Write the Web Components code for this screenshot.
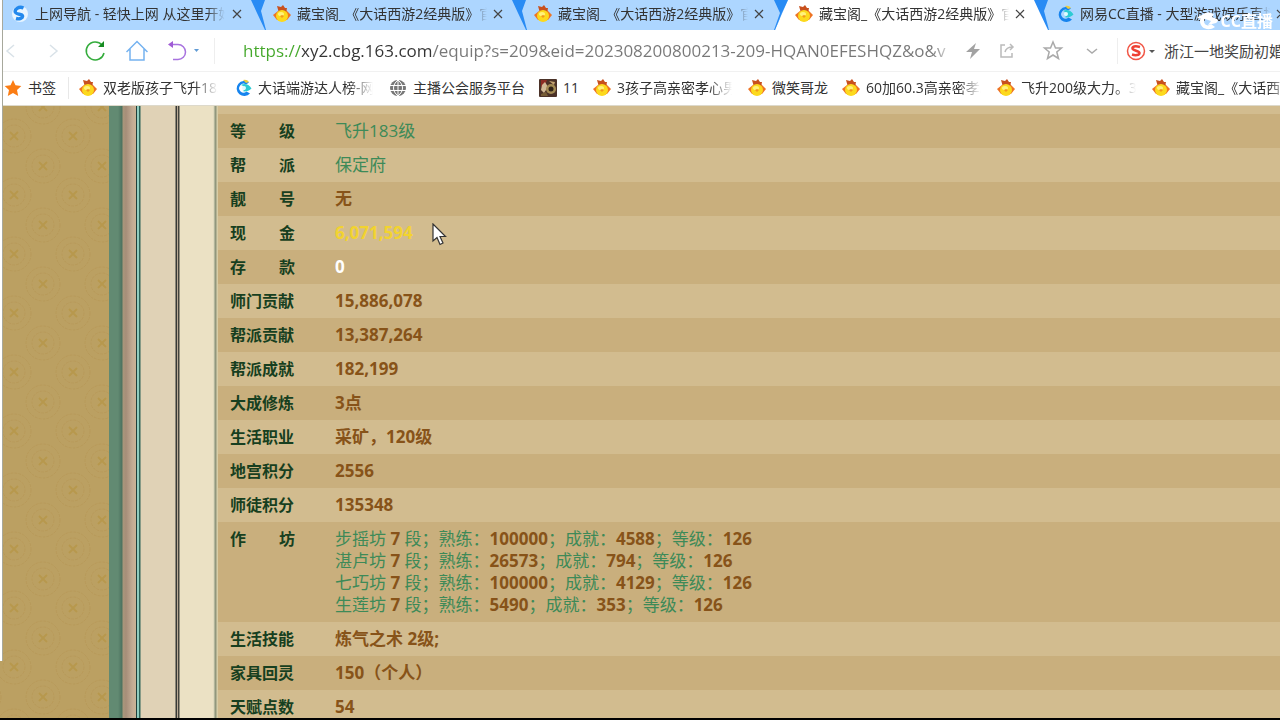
<!DOCTYPE html>
<html lang="zh-CN">
<head>
<meta charset="utf-8">
<title>藏宝阁_《大话西游2经典版》</title>
<style>
html, body { margin: 0; height: 100%; }
body { overflow: hidden; font-family: "Open Sans", "Noto Sans CJK SC", sans-serif; font-size: 14px; color: #333; background: #000; }
</style>
</head>
<body>
<browser-window>
  <tab-strip slot="tabs">
    <browser-tab icon="sogou" first>上网导航 - 轻快上网 从这里开始</browser-tab>
    <browser-tab icon="duck">藏宝阁_《大话西游2经典版》官方</browser-tab>
    <browser-tab icon="duck" before-active>藏宝阁_《大话西游2经典版》官方</browser-tab>
    <browser-tab icon="duck" active>藏宝阁_《大话西游2经典版》官方</browser-tab>
    <browser-tab icon="cc" last>网易CC直播 - 大型游戏娱乐直播</browser-tab>
  </tab-strip>
  <tool-bar slot="toolbar"></tool-bar>
  <bookmark-bar slot="bookmarks">
    <book-mark icon="star">书签</book-mark>
    <book-mark icon="duck" divided>双老版孩子飞升183</book-mark>
    <book-mark icon="cc">大话端游达人榜-网易</book-mark>
    <book-mark icon="globe">主播公会服务平台</book-mark>
    <book-mark icon="photo">11</book-mark>
    <book-mark icon="duck">3孩子高亲密孝心男号</book-mark>
    <book-mark icon="duck">微笑哥龙</book-mark>
    <book-mark icon="duck">60加60.3高亲密孝心</book-mark>
    <book-mark icon="duck">飞升200级大力。3孩</book-mark>
    <book-mark icon="duck">藏宝阁_《大话西游2</book-mark>
  </bookmark-bar>
  <game-page>
    <role-info></role-info>
  </game-page>
</browser-window>
<live-mark></live-mark>
<mouse-pointer></mouse-pointer>

<script>
const define = (name, html, setup) => {
  const template = document.createElement('template');
  template.innerHTML = html;
  customElements.define(name, class extends HTMLElement {
    constructor() {
      super();
      this.attachShadow({ mode: 'open' }).append(template.content.cloneNode(true));
    }
    connectedCallback() { if (setup) setup(this, this.shadowRoot); }
  });
};

const ICONS = {
  duck: `<path d="M0 10L5 6L13 5L18 10L14 15L4 15Z" fill="#ee7424"/><path d="M4 1L8 2L10 0L12 3L14 3L13 8L6 8Z" fill="#c8501e"/><ellipse cx="9" cy="11" rx="6" ry="6" fill="#fcd91d"/><ellipse cx="8" cy="9" rx="3" ry="2" fill="#fff27c"/><path d="M7 11L9 10L11 11L9 13Z" fill="#f29a1c"/>`,
  cc: `<path d="M15 3.5A7.6 7.6 0 1 0 16 14.5L12.5 12.5A4.4 4.4 0 1 1 12 5.5Z" fill="#1684ee"/><path d="M7 6C10 4 15 5 17.500 9.500C15 12 11 13 8.500 12C12 11 12 8 7 6Z" fill="#2dcbd4"/><path d="M9 1Q13 0 15 3L12 4Z" fill="#edcc3d"/><circle cx="10" cy="9" r="2" fill="#dffcff"/>`,
  sogou: `<circle cx="9" cy="9" r="8" fill="#e8f5ff"/><path d="M12.500 3C8 1 3 4 4.500 7.500C6 10 11 8.500 11.500 11C12 13 8.500 14.500 5 13.500" fill="none" stroke="#2389ed" stroke-width="3.4"/>`,
  star: `<path d="M9 1L11.500 6.300L17.300 7L13 11L14.200 17L9 14L3.800 17L5 11L.7 7L6.500 6.300Z" fill="#fb7d14"/>`,
  globe: `<circle cx="9" cy="9" r="8" fill="#777"/><path d="M1 6.500H17M1 11.500H17M9 1V17M9 1C3 6 3 12 9 17M9 1C15 6 15 12 9 17" stroke="#fff" fill="none"/>`,
  photo: `<rect width="18" height="18" rx="1" fill="#4b3228"/><path d="M2 1H8L6 6L2 8Z" fill="#8d2d24"/><path d="M3 6L6 3L9 8L5 14L2 11Z" fill="#d1b995"/><circle cx="12" cy="10" r="5" fill="#a38b54"/><circle cx="12" cy="10" r="2.500" fill="#2f2218"/><path d="M10 2L16 3L15 6Z" fill="#c5a572"/><path d="M2 15L7 13L9 17H2Z" fill="#765c35"/>`
};

customElements.define('site-icon', class extends HTMLElement {
  static observedAttributes = ['name'];
  constructor() {
    super();
    this.attachShadow({ mode: 'open' }).innerHTML = `<style>
:host { display: block; flex: none; width: 18px; height: 18px; }
svg { display: block; }
</style><svg width="18" height="18" viewBox="0 0 18 18" aria-hidden="true"></svg>`;
  }
  attributeChangedCallback(attr, old, value) {
    this.shadowRoot.querySelector('svg').innerHTML = ICONS[value] || '';
  }
});

define('browser-window', `<style>
:host { display: flex; flex-direction: column; height: 100vh; box-sizing: border-box; position: relative; border-bottom: 2px solid #000; }
header { flex: none; background: #fff; }
main { flex: 1; min-height: 0; overflow: hidden; }
.edge { position: absolute; left: 0; top: 0; width: 2px; height: 92%; background: #fff; border-right: 1px solid #a7a89c; }
</style>
<header><slot name="tabs"></slot><slot name="toolbar"></slot><slot name="bookmarks"></slot></header>
<main><slot></slot></main><div class="edge"></div>`);

define('tab-strip', `<style>
:host { display: flex; height: 30px; background: #add6ff; overflow: hidden; }
</style><slot></slot>`);

define('browser-tab', `<style>
:host { display: flex; flex: none; align-items: center; box-sizing: border-box; width: 261px; height: 30px; padding: 0 12px 2px 15px; position: relative; }
:host([first]) { width: 258px; padding-left: 11px; }
:host([active]) { background: #fff; }
.label { width: 190px; margin-left: 6px; line-height: 22px; white-space: nowrap; overflow: hidden; mask-image: linear-gradient(90deg, #000 172px, transparent 190px); }
button { width: 18px; height: 18px; margin-left: auto; padding: 0; border: 0; background: none; }
button svg { display: block; margin: auto; }
.split { position: absolute; right: -10px; top: 0; z-index: 1; }
:host([last]) .split { display: none; }
</style>
<site-icon></site-icon><span class="label"><slot></slot></span>
<button aria-label="关闭标签页"><svg width="10" height="10" viewBox="0 0 10 10"><path d="M1 1L9 9M9 1L1 9" stroke="#444" stroke-width="1.200"/></svg></button>
<svg class="split" width="20" height="30" viewBox="0 0 20 30"></svg>`,
  (el, root) => {
    root.querySelector('site-icon').setAttribute('name', el.getAttribute('icon'));
    const before = el.hasAttribute('before-active'), active = el.hasAttribute('active');
    root.querySelector('.split').innerHTML = before
      ? `<path d="M10 0H18L5 30H10Z" fill="#fff"/><path d="M5 30H0V0H18Z" fill="#add6ff"/><path d="M4 0H18L12 13L5 30H4L10 13Z" fill="#288bf4"/>`
      : `${active ? '<path d="M5 0L18 30H20V0Z" fill="#add6ff"/><path d="M5 0L18 30H10V0Z" fill="#fff"/>' : ''}<path d="M3 0H17L13 11L18 30H17L9 13Z" fill="#288bf4"/>`;
  });

define('tool-bar', `<style>
:host { display: flex; align-items: center; height: 42px; border-bottom: 1px solid #f1f1f1; box-sizing: border-box; }
nav { display: flex; flex: none; gap: 20px; }
button { width: 22px; height: 24px; padding: 0; border: 0; background: none; flex: none; }
button svg { display: block; }
nav button.wide { width: 36px; }
svg { fill: none; stroke-width: 1.500; }
.sep { flex: none; width: 1px; height: 26px; background: #eee; }
.sep.first { margin: 0 28px 0 10px; }
input { box-sizing: border-box; min-width: 0; padding: 0; border: 0; outline: 0; font-family: inherit; background: none; }
.url { flex: 1; height: 30px; font-size: 17px; color: transparent; background: linear-gradient(90deg, #44a82b 59px, #333 59px, #333 190px, #777 190px, #777 calc(100% - 14px), #ccc); background-clip: text; -webkit-background-clip: text; }
.tools { display: flex; flex: none; align-items: center; margin-left: 16px; }
.tools button:nth-child(2) { margin-left: 12px; }
.tools button:nth-child(3) { margin-left: 24px; }
.tools button:nth-child(4) { margin-left: 17px; }
.tools .sep { margin: 0 8px 0 14px; }
.tools button.engine { width: 30px; }
.search { width: 116px; height: 30px; margin-left: 8px; font-size: 15px; color: #444; }
</style>
<nav>
<button aria-label="后退"><svg width="22" height="24"><path d="M14 6L7 12L14 18" stroke="#d9e2e8"/></svg></button>
<button aria-label="前进"><svg width="22" height="24"><path d="M8 6L15 12L8 18" stroke="#d9e2e8"/></svg></button>
<button aria-label="刷新"><svg width="22" height="24"><path d="M18 6A9 9 0 1 0 20 14" stroke="#34ac3c" stroke-width="1.500"/><path d="M14 8H20V2Z" fill="#168b21"/></svg></button>
<button aria-label="主页"><svg width="22" height="24"><path d="M.5 13L11 2.500L21.500 13M4 10V21H18V10" stroke="#75b2f0"/></svg></button>
<button class="wide" aria-label="撤销"><svg width="36" height="24"><path d="M2 5.500H10A7.500 7.500 0 0 1 10 20.500H5" stroke="#a873df" stroke-width="1.500"/><path d="M0 5.500L5 2V9Z" fill="#a05bd5"/><path d="M26 10H31L28.500 13Z" fill="#609bd5"/></svg></button>
</nav>
<span class="sep first"></span>
<input class="url" aria-label="网址" value="https://xy2.cbg.163.com/equip?s=209&amp;eid=202308200800213-209-HQAN0EFESHQZ&amp;o&amp;view">
<div class="tools">
<button aria-label="加速"><svg width="22" height="24"><path d="M14 4L4 13H10L8 20L18 10H12Z" fill="#a2a2a2"/></svg></button>
<button aria-label="分享"><svg width="22" height="24"><path d="M9 6H5V18H16V14M9 13Q10 8 17 8M14 5L17 8L14 11" stroke="#bbb"/></svg></button>
<button aria-label="收藏"><svg width="22" height="24"><path d="M11 3L13.500 9H19.500L14.800 13L16.500 19.500L11 16L5.500 19.500L7.200 13L2.500 9H8.500Z" stroke="#aaa"/></svg></button>
<button aria-label="更多"><svg width="22" height="24"><path d="M6 10L11 14L16 10" stroke="#aaa"/></svg></button>
<span class="sep"></span>
<button class="engine" aria-label="搜索引擎"><svg width="30" height="24"><circle cx="10" cy="12" r="8.500" stroke="#f15545"/><path d="M14 8C9 6.500 6 7.500 6.500 9.500C7 12 13.500 11.500 13.500 14C13.500 16.500 9 16.500 6 15.500" stroke="#ee4134" stroke-width="2.500"/><path d="M23 11H29L26 14Z" fill="#555"/></svg></button>
<input class="search" aria-label="搜索" value="浙江一地奖励初婚夫妻">
</div>`);

define('bookmark-bar', `<style>
:host { display: flex; align-items: center; gap: 14px; height: 34px; padding: 0 0 2px 4px; box-sizing: border-box; overflow: hidden; border-bottom: 1px solid #ddd9cb; }
</style><slot></slot>`);

define('book-mark', `<style>
:host { display: block; flex: none; }
:host([divided]) { border-left: 1px solid #e8e8e8; padding-left: 10px; margin-left: -2px; }
a { display: flex; align-items: center; gap: 6px; color: #333; text-decoration: none; line-height: 22px; white-space: nowrap; }
span.long { width: 117px; overflow: hidden; mask-image: linear-gradient(90deg, #000 92px, transparent 115px); }
</style><a href="#"><site-icon></site-icon><span><slot></slot></span></a>`,
  (el, root) => {
    root.querySelector('site-icon').setAttribute('name', el.getAttribute('icon'));
    if (el.textContent.length > 8) root.querySelector('span').className = 'long';
  });

define('game-page', `<style>
:host { display: flex; height: 100%; background: #d2bc8f; }
.cloth { flex: none; width: 109px; }
.cloth svg { display: block; width: 100%; height: 100%; }
.frame { flex: none; width: 109px; background: linear-gradient(90deg,
 #628a72 0 9px, #4c725f 13px, #a9977b 14px, #a68e79 17px, #c5ad96 24px, #c9b395 27px, #203f3c 27px 28px, #91ccbf 28px 30px, #2c6257 30px 31px,
 #e0d2b6 32px 66px, #383a36 67px 68px, #b9a994 68px 69px, #45443c 69px 70px, #ebe1c4 71px 104px, #d5d3b8 105px, #91977d 106px 107px, #d7cda7 108px); }
section { flex: 1; min-width: 0; }
</style>
<div class="cloth"><svg aria-hidden="true"><defs><pattern id="coins" x="14" y="1" width="59" height="59" patternUnits="userSpaceOnUse">
<g fill="none" stroke="#b18f4b" stroke-opacity=".4"><g stroke-dasharray="3 1"><circle cx="29" cy="59" r="11"/><circle cx="29" cy="59" r="17"/><circle cx="29" cy="0" r="11"/><circle cx="29" cy="0" r="17"/><circle cx="0" cy="29" r="11"/><circle cx="0" cy="29" r="17"/><circle cx="59" cy="29" r="11"/><circle cx="59" cy="29" r="17"/></g>
<path d="M25 -4L33 4M33 -4L25 4M25 55L33 63M33 55L25 63M-4 25L4 33M4 25L-4 33M55 25L63 33M63 25L55 33" stroke="#b28b2e" stroke-width="2"/></g></pattern></defs>
<rect width="100%" height="100%" fill="#bba062"/><rect width="100%" height="100%" fill="url(#coins)"/></svg></div>
<div class="frame"></div><section><slot></slot></section>`);

const ROWS = [
  ['等 级', '飞升183级', 'green'], ['帮 派', '保定府', 'green'], ['靓 号', '无'],
  ['现 金', '6,071,594', 'gold'], ['存 款', '0', 'white'], ['师门贡献', '15,886,078'],
  ['帮派贡献', '13,387,264'], ['帮派成就', '182,199'], ['大成修炼', '3点'],
  ['生活职业', '采矿，120级'], ['地宫积分', '2556'], ['师徒积分', '135348'],
  ['作 坊', [['步摇坊', 100000, 4588], ['湛卢坊', 26573, 794], ['七巧坊', 100000, 4129], ['生莲坊', 5490, 353]]
    .map(([n, a, b]) => `<div>${n} <b>7</b> 段；熟练：<b>${a}</b>；成就：<b>${b}</b>；等级：<b>126</b></div>`).join(''), 'green'],
  ['生活技能', '炼气之术 2级;'], ['家具回灵', '150（个人）'], ['天赋点数', '54']
];

define('role-info', `<style>
:host { display: block; padding-top: 8px; }
table { width: 100%; border-collapse: collapse; background: #d2bc8f; }
tr:nth-child(odd) { background: #c9af7d; }
th, td { padding: 6px 0; line-height: 22px; vertical-align: top; text-align: left; }
th { width: 65px; padding-left: 12px; padding-right: 40px; font-size: 16px; color: #173f20; }
th div { display: flex; justify-content: space-between; height: 22px; white-space: nowrap; }
td { font-size: 17px; font-weight: 700; color: #875319; }
td div { height: 22px; white-space: nowrap; }
td.green { color: #3d8a58; font-weight: 400; }
td.gold { color: #f2d32f; }
td.white { color: #fff; }
b { color: #875319; }
</style><table><tbody></tbody></table>`,
  (el, root) => {
    root.querySelector('tbody').innerHTML = ROWS.map(([label, value, tone = '']) =>
      `<tr><th scope="row"><div>${label.split(' ').map(p => `<span>${p}</span>`).join('')}</div></th><td class="${tone}">${value.startsWith('<div>') ? value : `<div>${value}</div>`}</td></tr>`).join('');
  });

define('live-mark', `<style>
:host { position: fixed; right: 7px; top: 10px; display: flex; align-items: center; gap: 1px; color: #fff; font-size: 16px; font-weight: 700; line-height: 22px; }
</style><svg width="24" height="20" viewBox="0 0 22 20"><path d="M17 3.500C11 -1 3 3 3 10C3 17 11 21 18 16L14 13C11 16 7 14 7 10C7 6 11 4 14 7Z" fill="#fff"/><path d="M0 7Q4 3 10 4L20 8Q22 10 19 12L11 14L14 10L8 8Z" fill="#fff"/></svg><span>CC直播</span>`);

define('mouse-pointer', `<style>
:host { position: fixed; left: 432px; top: 223px; display: block; pointer-events: none; }
svg { display: block; }
</style><svg width="15" height="23" viewBox="0 0 15 23"><path d="M1 1V18L5 14.500L8 21.500L11 20L8 13.500H13.500Z" fill="#fff" stroke="#333" stroke-width="1.200"/></svg>`);
</script>
</body>
</html>
